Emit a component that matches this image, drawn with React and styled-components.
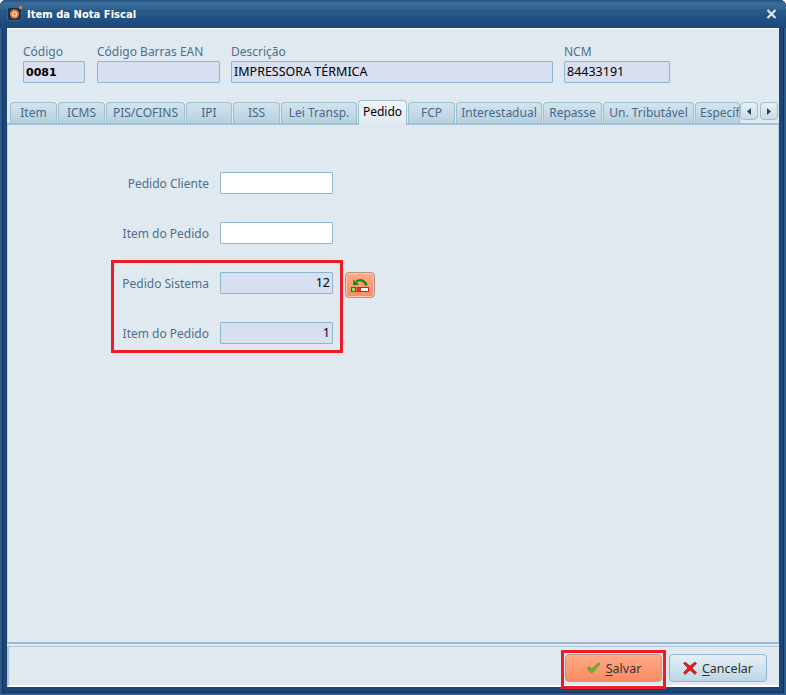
import React from "react";
import styled, { createGlobalStyle } from "styled-components";

const GlobalStyle = createGlobalStyle`
  html, body {
    margin: 0;
    padding: 0;
    background: #ffffff;
  }
  * {
    box-sizing: border-box;
  }
`;

const Window = styled.div`
  width: 786px;
  height: 695px;
  display: flex;
  flex-direction: column;
  padding: 0 7px 8px;
  background: #1d4677;
  border-radius: 6px 6px 0 0;
  box-shadow: inset 0 0 0 2px #2a5a8e, inset 0 0 0 3px #14335b;
  font-family: "Noto Sans", Tahoma, sans-serif;
  font-size: 12px;
  overflow: hidden;
`;

const TitleBar = styled.div`
  height: 28px;
  flex: none;
  margin: 0 -7px;
  padding: 0 9px 0 7px;
  display: flex;
  align-items: center;
  gap: 4px;
  background: linear-gradient(#21507f 0, #3b6d9b 3px, #33648f 9px, #275a8c 10px, #1b4679 100%);
  border-radius: 6px 6px 0 0;
`;

const TitleText = styled.span`
  flex: 1;
  color: #ffffff;
  font-family: "DejaVu Sans", sans-serif;
  font-size: 10px;
  font-weight: 700;
`;

const Client = styled.div`
  flex: 1;
  min-height: 0;
  display: flex;
  flex-direction: column;
  background: #e1e9f0;
  border-top: 1px solid #ffffff;
`;

const Header = styled.div`
  height: 71px;
  flex: none;
  display: flex;
  gap: 11px;
  padding: 15px 0 0 16px;
`;

const Field = styled.div`
  width: ${(p) => p.$w}px;
  display: flex;
  flex-direction: column;
`;

const FieldLabel = styled.label`
  height: 17px;
  line-height: 15px;
  color: #4d6f90;
`;

const Input = styled.div`
  width: ${(p) => p.$w || 113}px;
  height: 22px;
  flex: none;
  padding: 0 2px ${(p) => (p.$bold ? 0 : 2)}px;
  display: flex;
  align-items: center;
  justify-content: ${(p) => (p.$right ? "flex-end" : "flex-start")};
  background: ${(p) => (p.$white ? "#ffffff" : "#d8dff0")};
  border: 1px solid #8db6cf;
  border-radius: 1px;
  color: #000000;
  font-family: ${(p) => (p.$bold ? '"DejaVu Sans"' : '"Noto Sans"')}, sans-serif;
  font-size: ${(p) => (p.$bold ? 11 : 12.5)}px;
  font-weight: ${(p) => (p.$bold ? 700 : 400)};
`;

const TabBar = styled.div`
  position: relative;
  height: 25px;
  flex: none;
  display: flex;
  align-items: flex-end;
  gap: 1px;
  padding: 0 0 0 3px;
  border-bottom: 2px solid #a3c1d4;
`;

const Tab = styled.div`
  width: ${(p) => p.$w}px;
  height: ${(p) => (p.$active ? 25 : 21)}px;
  flex: none;
  padding-bottom: 2px;
  display: flex;
  align-items: center;
  justify-content: center;
  white-space: nowrap;
  overflow: hidden;
  border: 1px solid #9dbfd2;
  border-bottom: none;
  border-radius: 4px 4px 0 0;
  color: ${(p) => (p.$active ? "#000000" : "#48698a")};
  background: ${(p) =>
    p.$active ? "linear-gradient(#f2f6f9, #e1e9f0)" : "linear-gradient(#d5e4ed, #b6d0de)"};
  ${(p) => p.$active && "margin-bottom: -2px; padding-bottom: 3px; position: relative;"}
  ${(p) => p.$cut && "justify-content: flex-start; padding-left: 4px;"}
`;

const ScrollButtons = styled.div`
  position: absolute;
  right: 1px;
  bottom: 3px;
  display: flex;
  gap: 2px;
`;

const ScrollButton = styled.div`
  width: 18px;
  height: 18px;
  display: flex;
  align-items: center;
  justify-content: center;
  background: linear-gradient(#e9f0f5, #c6dbe7);
  border: 1px solid #9dbfd2;
  border-radius: 4px;
`;

const TabPanel = styled.div`
  flex: 1;
  min-height: 0;
  display: flex;
  flex-direction: column;
  gap: 28px;
  padding: 47px 0 0 106px;
  border: 1px solid #b7cfe0;
  border-top: none;
  border-bottom: 2px solid #9db8d0;
`;

const Row = styled.div`
  display: flex;
  align-items: center;
  gap: 11px;
`;

const RowLabel = styled.label`
  width: 95px;
  text-align: right;
  white-space: nowrap;
  color: #4d6f90;
`;

const SystemGroup = styled.div`
  display: flex;
  align-items: flex-start;
  gap: 2px;
  margin: -12px 0 0 -3px;
`;

const Highlight = styled.div`
  display: flex;
  flex-direction: column;
  gap: 28px;
  padding: 9px 7px 6px 0;
  border: 3px solid #ed1c24;
`;

const IconButton = styled.div`
  width: 30px;
  height: 26px;
  margin-top: 12px;
  display: flex;
  align-items: center;
  justify-content: center;
  background: linear-gradient(#ffac87, #f98d66);
  border: 1px solid #b3948a;
  border-radius: 4px;
  box-shadow: inset 0 0 0 1px #ffc4a8;
`;

const Footer = styled.div`
  height: 41px;
  flex: none;
  margin-top: 2px;
  padding: 7px 12px 0 0;
  display: flex;
  justify-content: flex-end;
  gap: 3px;
  border-top: 1px solid #a9c6e0;
  border-left: 2px solid #a9c6e0;
  border-bottom: 2px solid #ffffff;
`;

const SaveOutline = styled.div`
  display: flex;
  margin: -4px 0;
  border: 3px solid #ed1c24;
  padding: 1px;
`;

const ActionButton = styled.div`
  width: ${(p) => p.$w}px;
  height: 28px;
  display: flex;
  align-items: center;
  justify-content: center;
  gap: 5px;
  border-radius: 4px;
  color: #333333;
  font-size: 12.5px;
  ${(p) =>
    p.$primary
      ? "background: linear-gradient(#ffab85, #f98b63); border: 1px solid #c09a8d;"
      : "background: linear-gradient(#e6eff5, #bcd6e6); border: 1px solid #8db6cf;"}
  u {
    text-underline-offset: 2px;
  }
`;

const AppIcon = () => (
  <svg width="16" height="16" viewBox="0 0 16 16">
    <rect x="0.5" y="1.5" width="14" height="13" rx="1.5" fill="#1a3550" stroke="#3b6286" />
    <circle cx="7.5" cy="8" r="4.5" fill="#f07a35" />
    <circle cx="7.5" cy="8" r="2" fill="none" stroke="#ffe2c8" strokeWidth="1.2" />
    <rect x="12" y="0" width="3" height="3" fill="#f0742a" />
  </svg>
);

const CloseIcon = () => (
  <svg width="11" height="10" viewBox="0 0 11 10">
    <path d="M1.5 1 L9.5 9 M9.5 1 L1.5 9" stroke="#d9e6f0" strokeWidth="2.2" fill="none" />
  </svg>
);

const ArrowLeft = () => (
  <svg width="4" height="7" viewBox="0 0 4 7">
    <path d="M4 0 L0 3.5 L4 7 Z" fill="#27425f" />
  </svg>
);

const ArrowRight = () => (
  <svg width="4" height="7" viewBox="0 0 4 7">
    <path d="M0 0 L4 3.5 L0 7 Z" fill="#27425f" />
  </svg>
);

const ReturnIcon = () => (
  <svg width="18" height="16" viewBox="0 0 18 16">
    <path d="M15.5 8.5 C14 4 9.5 1.5 5.5 4.5" stroke="#128a12" strokeWidth="2.4" fill="none" />
    <path d="M2.5 2.5 L8 7.5 L2 8.5 Z" fill="#128a12" />
    <rect x="0.5" y="10.5" width="4" height="4" fill="#8fe05a" stroke="#158015" />
    <rect x="6" y="10.5" width="11.5" height="4" fill="#ffffff" stroke="#d51a1a" />
    <rect x="6" y="10.5" width="4" height="4" fill="#e53030" />
  </svg>
);

const CheckIcon = () => (
  <svg width="15" height="12" viewBox="0 0 15 12">
    <path d="M1 6.5 L3.5 5 L5.5 7.5 L12.5 1 L14 2 L5.8 11 Z" fill="#63c22f" stroke="#2e8a1c" strokeWidth="0.7" />
  </svg>
);

const CancelIcon = () => (
  <svg width="14" height="14" viewBox="0 0 14 14">
    <path d="M2 1 L7 5 L12 1 L13.5 2.5 L9 7 L13.5 11.5 L12 13.5 L7 9 L2 13.5 L0.5 11.5 L5 7 L0.5 2.5 Z" fill="#e0201c" stroke="#9c1210" strokeWidth="0.6" />
  </svg>
);

const tabs = [
  { name: "Item", w: 47 },
  { name: "ICMS", w: 47 },
  { name: "PIS/COFINS", w: 79 },
  { name: "IPI", w: 46 },
  { name: "ISS", w: 47 },
  { name: "Lei Transp.", w: 76 },
  { name: "Pedido", w: 49, active: true },
  { name: "FCP", w: 47 },
  { name: "Interestadual", w: 86 },
  { name: "Repasse", w: 59 },
  { name: "Un. Tributável", w: 91 },
  { name: "Específicos", w: 45, cut: true },
];

const App = () => {
  return (
    <>
      <GlobalStyle />
      <Window>
        <TitleBar>
          <AppIcon />
          <TitleText>Item da Nota Fiscal</TitleText>
          <CloseIcon />
        </TitleBar>
        <Client>
          <Header>
            <Field $w={63}>
              <FieldLabel>Código</FieldLabel>
              <Input $w={62} $bold>0081</Input>
            </Field>
            <Field $w={123}>
              <FieldLabel>Código Barras EAN</FieldLabel>
              <Input $w={123} />
            </Field>
            <Field $w={322}>
              <FieldLabel>Descrição</FieldLabel>
              <Input $w={322}>IMPRESSORA TÉRMICA</Input>
            </Field>
            <Field $w={106}>
              <FieldLabel>NCM</FieldLabel>
              <Input $w={106}>84433191</Input>
            </Field>
          </Header>
          <TabBar>
            {tabs.map((tab) => (
              <Tab key={tab.name} $w={tab.w} $active={tab.active} $cut={tab.cut}>
                {tab.name}
              </Tab>
            ))}
            <ScrollButtons>
              <ScrollButton><ArrowLeft /></ScrollButton>
              <ScrollButton><ArrowRight /></ScrollButton>
            </ScrollButtons>
          </TabBar>
          <TabPanel>
            <Row>
              <RowLabel>Pedido Cliente</RowLabel>
              <Input $white />
            </Row>
            <Row>
              <RowLabel>Item do Pedido</RowLabel>
              <Input $white />
            </Row>
            <SystemGroup>
              <Highlight>
                <Row>
                  <RowLabel>Pedido Sistema</RowLabel>
                  <Input $right>12</Input>
                </Row>
                <Row>
                  <RowLabel>Item do Pedido</RowLabel>
                  <Input $right>1</Input>
                </Row>
              </Highlight>
              <IconButton><ReturnIcon /></IconButton>
            </SystemGroup>
          </TabPanel>
          <Footer>
            <SaveOutline>
              <ActionButton $w={97} $primary>
                <CheckIcon />
                <span><u>S</u>alvar</span>
              </ActionButton>
            </SaveOutline>
            <ActionButton $w={98}>
              <CancelIcon />
              <span><u>C</u>ancelar</span>
            </ActionButton>
          </Footer>
        </Client>
      </Window>
    </>
  );
};

export default App;
